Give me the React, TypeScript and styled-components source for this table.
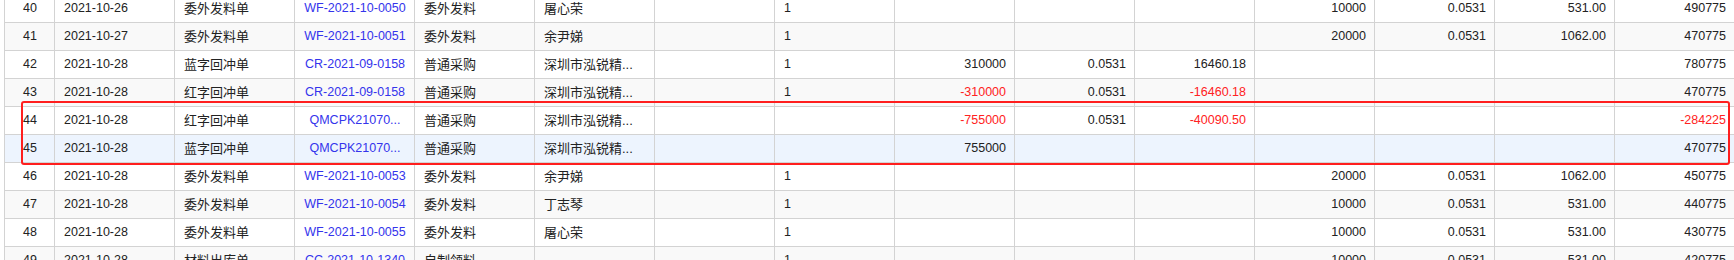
import React from "react";
import styled, { createGlobalStyle } from "styled-components";

const GlobalStyle = createGlobalStyle`
  html, body { margin: 0; padding: 0; background: #ffffff; }
  body { font-family: "Liberation Sans", Arial, "Noto Sans CJK SC", sans-serif; }
`;

const Viewport = styled.div`
  width: 1734px;
  height: 260px;
  overflow: hidden;
  background: #ffffff;
`;

const Grid = styled.div`
  position: relative;
  margin: -5px 0 0 4px;
  border-left: 1px solid #d3d3d3;
  width: 1730px;
`;

type RowKind = "plain" | "alt" | "selected";

const Row = styled.div<{ $kind: RowKind }>`
  display: grid;
  grid-template-columns: 50px repeat(14, 120px);
  height: 28px;
  background: ${(p) =>
    p.$kind === "selected" ? "#edf4fe" : p.$kind === "alt" ? "#f9f9f9" : "#ffffff"};
`;

type Align = "left" | "center" | "right";
type Tone = "text" | "link" | "neg";

const Cell = styled.div<{ $align: Align; $tone: Tone; $cjk?: boolean }>`
  box-sizing: border-box;
  border-right: 1px solid #d3d3d3;
  border-bottom: 1px solid #d3d3d3;
  padding: 0 8px 0 9px;
  height: 28px;
  line-height: 27px;
  font-size: ${(p) => (p.$cjk ? "13px" : "12.5px")};
  text-align: ${(p) => p.$align};
  color: ${(p) => (p.$tone === "link" ? "#3434ec" : p.$tone === "neg" ? "#ff2222" : "#222222")};
  white-space: nowrap;
  overflow: hidden;
`;

const Highlight = styled.div`
  position: absolute;
  left: 16px;
  top: 106px;
  width: 1709px;
  height: 64px;
  box-sizing: border-box;
  border: 2px solid #ff1e1e;
  border-radius: 3px;
  pointer-events: none;
`;

type RowData = {
  no: string;
  date: string;
  type: string;
  code: string;
  cat: string;
  party: string;
  one: string;
  inQty: string;
  inPrice: string;
  inAmt: string;
  outQty: string;
  outPrice: string;
  outAmt: string;
  balance: string;
  kind: RowKind;
};

const SZ = "深圳市泓锐精...";

const rows: RowData[] = [
  { no: "40", date: "2021-10-26", type: "委外发料单", code: "WF-2021-10-0050", cat: "委外发料", party: "屠心荣", one: "1", inQty: "", inPrice: "", inAmt: "", outQty: "10000", outPrice: "0.0531", outAmt: "531.00", balance: "490775", kind: "plain" },
  { no: "41", date: "2021-10-27", type: "委外发料单", code: "WF-2021-10-0051", cat: "委外发料", party: "余尹娣", one: "1", inQty: "", inPrice: "", inAmt: "", outQty: "20000", outPrice: "0.0531", outAmt: "1062.00", balance: "470775", kind: "alt" },
  { no: "42", date: "2021-10-28", type: "蓝字回冲单", code: "CR-2021-09-0158", cat: "普通采购", party: SZ, one: "1", inQty: "310000", inPrice: "0.0531", inAmt: "16460.18", outQty: "", outPrice: "", outAmt: "", balance: "780775", kind: "plain" },
  { no: "43", date: "2021-10-28", type: "红字回冲单", code: "CR-2021-09-0158", cat: "普通采购", party: SZ, one: "1", inQty: "-310000", inPrice: "0.0531", inAmt: "-16460.18", outQty: "", outPrice: "", outAmt: "", balance: "470775", kind: "alt" },
  { no: "44", date: "2021-10-28", type: "红字回冲单", code: "QMCPK21070...", cat: "普通采购", party: SZ, one: "", inQty: "-755000", inPrice: "0.0531", inAmt: "-40090.50", outQty: "", outPrice: "", outAmt: "", balance: "-284225", kind: "plain" },
  { no: "45", date: "2021-10-28", type: "蓝字回冲单", code: "QMCPK21070...", cat: "普通采购", party: SZ, one: "", inQty: "755000", inPrice: "", inAmt: "", outQty: "", outPrice: "", outAmt: "", balance: "470775", kind: "selected" },
  { no: "46", date: "2021-10-28", type: "委外发料单", code: "WF-2021-10-0053", cat: "委外发料", party: "余尹娣", one: "1", inQty: "", inPrice: "", inAmt: "", outQty: "20000", outPrice: "0.0531", outAmt: "1062.00", balance: "450775", kind: "plain" },
  { no: "47", date: "2021-10-28", type: "委外发料单", code: "WF-2021-10-0054", cat: "委外发料", party: "丁志琴", one: "1", inQty: "", inPrice: "", inAmt: "", outQty: "10000", outPrice: "0.0531", outAmt: "531.00", balance: "440775", kind: "alt" },
  { no: "48", date: "2021-10-28", type: "委外发料单", code: "WF-2021-10-0055", cat: "委外发料", party: "屠心荣", one: "1", inQty: "", inPrice: "", inAmt: "", outQty: "10000", outPrice: "0.0531", outAmt: "531.00", balance: "430775", kind: "plain" },
  { no: "49", date: "2021-10-28", type: "材料出库单", code: "CC-2021-10-1340", cat: "自制领料", party: "", one: "1", inQty: "", inPrice: "", inAmt: "", outQty: "10000", outPrice: "0.0531", outAmt: "531.00", balance: "420775", kind: "alt" },
];

const tone = (v: string): Tone => (v.startsWith("-") ? "neg" : "text");

export default function App() {
  return (
    <>
      <GlobalStyle />
      <Viewport>
        <Grid>
          {rows.map((r) => (
            <Row key={r.no} $kind={r.kind}>
              <Cell $align="center" $tone="text">{r.no}</Cell>
              <Cell $align="left" $tone="text">{r.date}</Cell>
              <Cell $align="left" $tone="text" $cjk>{r.type}</Cell>
              <Cell $align="center" $tone="link">{r.code}</Cell>
              <Cell $align="left" $tone="text" $cjk>{r.cat}</Cell>
              <Cell $align="left" $tone="text" $cjk>{r.party}</Cell>
              <Cell $align="left" $tone="text"></Cell>
              <Cell $align="left" $tone="text">{r.one}</Cell>
              <Cell $align="right" $tone={tone(r.inQty)}>{r.inQty}</Cell>
              <Cell $align="right" $tone="text">{r.inPrice}</Cell>
              <Cell $align="right" $tone={tone(r.inAmt)}>{r.inAmt}</Cell>
              <Cell $align="right" $tone="text">{r.outQty}</Cell>
              <Cell $align="right" $tone="text">{r.outPrice}</Cell>
              <Cell $align="right" $tone="text">{r.outAmt}</Cell>
              <Cell $align="right" $tone={tone(r.balance)}>{r.balance}</Cell>
            </Row>
          ))}
          <Highlight />
        </Grid>
      </Viewport>
    </>
  );
}
